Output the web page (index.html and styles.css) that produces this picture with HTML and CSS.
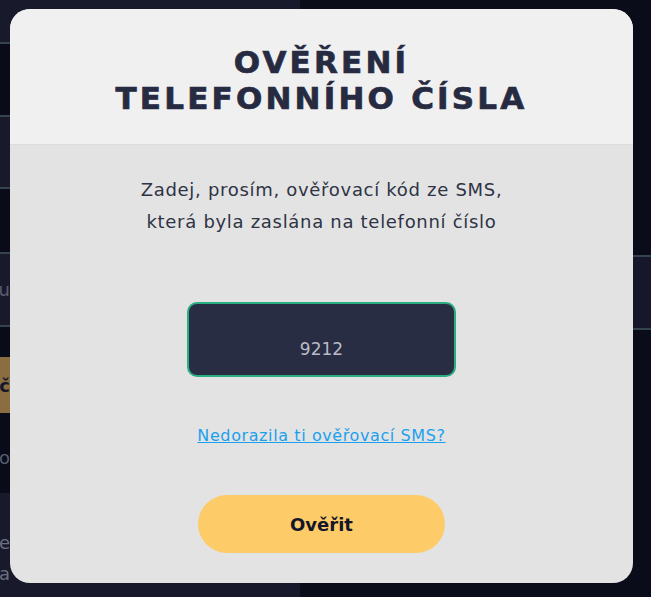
FILE: index.html
```html
<!DOCTYPE html>
<html lang="cs">
<head>
<meta charset="utf-8">
<title>Ověření telefonního čísla</title>
<link rel="stylesheet" href="styles.css">
</head>
<body>
<div class="page">
  <div class="side">
    <div class="srow srow-a"></div>
    <div class="srow srow-b"></div>
    <div class="srow srow-a2"></div>
    <div class="srow srow-b2"></div>
    <div class="srow srow-a3"><span class="ghost">Zobrazit všechny bonu</span></div>
    <div class="srow srow-b3"></div>
    <div class="srow srow-gold"><span class="ghost gold-t">Vklad č</span></div>
    <div class="srow srow-b4"><span class="ghost">Promo kód pro</span></div>
    <div class="srow srow-a4"><span class="ghost two">Nejoblíbenější hre<br>sázky a</span></div>
  </div>
  <div class="main">
    <div class="mrow mrow-top"></div>
    <div class="mrow mrow-band"></div>
    <div class="mrow mrow-rest"></div>
  </div>
</div>

<div class="modal">
  <div class="modal-head">
    <h1 class="title">OVĚŘENÍ<br>TELEFONNÍHO ČÍSLA</h1>
  </div>
  <div class="modal-body">
    <p class="lead">Zadej, prosím, ověřovací kód ze SMS,<br>která byla zaslána na telefonní číslo</p>
    <div class="code-field"><span class="code-value">9212</span></div>
    <a class="resend" href="#">Nedorazila ti ověřovací SMS?</a>
    <button class="verify" type="button">Ověřit</button>
  </div>
</div>
</body>
</html>
```

FILE: styles.css
```css
* { box-sizing: border-box; }
html, body { margin: 0; padding: 0; }
body {
  width: 651px;
  height: 597px;
  overflow: hidden;
  background: #0a0c1a;
  font-family: "DejaVu Sans", sans-serif;
  position: relative;
}

.page {
  display: flex;
  height: 597px;
}
.side {
  width: 300px;
  display: flex;
  flex-direction: column;
}
.srow { width: 100%; overflow: hidden; white-space: nowrap; display: flex; align-items: center; justify-content: flex-end; }
.srow-a { height: 44px; background: #181a2c; border-bottom: 2px solid #34444e; }
.srow-b { height: 73px; background: #090b18; border-bottom: 2px solid #34444e; }
.srow-a2 { height: 72px; background: #181a2c; border-bottom: 2px solid #34444e; }
.srow-b2 { height: 65px; background: #090b18; border-bottom: 2px solid #34444e; }
.srow-a3 { height: 73px; background: #181a2c; border-bottom: 2px solid #34444e; }
.srow-b3 { height: 30px; background: #090b18; }
.srow-gold { height: 56px; background: #8a6e42; }
.srow-b4 { height: 80px; background: #090b18; padding-top: 8px; }
.srow-a4 { flex: 1; background: #181a2c; align-items: flex-start; padding-top: 34px; }
.ghost {
  font-family: "DejaVu Sans", sans-serif;
  font-size: 18px;
  color: #585c70;
  margin-right: 290px;
}
.gold-t { color: #14162a; font-weight: bold; }
.two { display: block; text-align: right; line-height: 31px; color: #6a6e80; }

.main { flex: 1; display: flex; flex-direction: column; }
.mrow-top { height: 255px; background: #0a0c1a; }
.mrow-band { height: 75px; background: #16172b; border-top: 2px solid #34444e; border-bottom: 2px solid #34444e; }
.mrow-rest { flex: 1; background: #0a0c1a; }

.modal {
  position: absolute;
  left: 10px;
  top: 9px;
  width: 623px;
  height: 574px;
  border-radius: 20px;
  overflow: hidden;
  background: #e3e3e3;
  display: flex;
  flex-direction: column;
}
.modal-head {
  height: 136px;
  background: #f0f0f0;
  border-bottom: 1px solid #dcdcdc;
  display: flex;
  justify-content: center;
  padding-top: 35px;
}
.title {
  margin: 0;
  font-family: "DejaVu Sans", sans-serif;
  font-weight: bold;
  font-size: 31px;
  line-height: 36px;
  letter-spacing: 3.2px;
  -webkit-text-stroke: 0.7px #272b42;
  color: #272b42;
  text-align: center;
}
.modal-body {
  flex: 1;
  display: flex;
  flex-direction: column;
  align-items: center;
  padding-top: 29px;
}
.lead {
  margin: 0;
  font-size: 18px;
  line-height: 32px;
  letter-spacing: 0.7px;
  color: #2e3345;
  text-align: center;
}
.code-field {
  margin-top: 64px;
  width: 269px;
  height: 75px;
  background: #292d43;
  border: 2px solid #2aae7f;
  border-radius: 10px;
  display: flex;
  align-items: flex-end;
  justify-content: center;
  padding-bottom: 14px;
}
.code-value {
  font-size: 17px;
  line-height: 24px;
  color: #b9bcc6;
}
.resend {
  margin-top: 47px;
  font-size: 16px;
  line-height: 24px;
  letter-spacing: 0.6px;
  color: #1ba0ee;
  text-decoration: underline;
}
.verify {
  margin-top: 47px;
  width: 247px;
  height: 58px;
  border: none;
  border-radius: 29px;
  background: #fdcb67;
  font-family: "DejaVu Sans", sans-serif;
  font-weight: bold;
  font-size: 18px;
  color: #15162a;
  padding: 0;
}
```
